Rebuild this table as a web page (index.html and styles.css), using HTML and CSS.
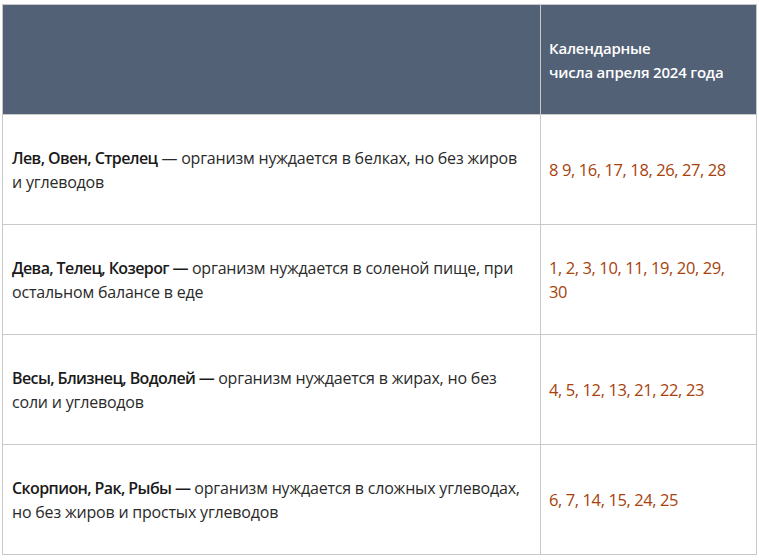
FILE: index.html
```html
<!DOCTYPE html>
<html lang="ru">
<head>
<meta charset="utf-8">
<link rel="stylesheet" href="styles.css">
</head>
<body>
<table class="tbl">
  <colgroup><col class="c1"><col class="c2"></colgroup>
  <thead>
    <tr class="head">
      <th></th>
      <th>Календарные<br>числа апреля 2024 года</th>
    </tr>
  </thead>
  <tbody>
    <tr>
      <td><b>Лев, Овен, Стрелец</b> — организм нуждается в белках, но без жиров и углеводов</td>
      <td class="num">8 9, 16, 17, 18, 26, 27, 28</td>
    </tr>
    <tr>
      <td><b>Дева, Телец, Козерог —</b> организм нуждается в соленой пище, при остальном балансе в еде</td>
      <td class="num">1, 2, 3, 10, 11, 19, 20, 29, 30</td>
    </tr>
    <tr>
      <td><b>Весы, Близнец, Водолей —</b> организм нуждается в жирах, но без соли и углеводов</td>
      <td class="num">4, 5, 12, 13, 21, 22, 23</td>
    </tr>
    <tr>
      <td><b>Скорпион, Рак, Рыбы —</b> организм нуждается в сложных углеводах, но без жиров и простых углеводов</td>
      <td class="num">6, 7, 14, 15, 24, 25</td>
    </tr>
  </tbody>
</table>
</body>
</html>
```

FILE: styles.css
```css
html, body {
  margin: 0;
  background: #ffffff;
}
body {
  padding: 4px 3px 0 2px;
  font-family: "Open Sans", "Noto Sans", sans-serif;
  color: #2a2a2a;
}
.tbl {
  border-collapse: collapse;
  width: 754px;
  table-layout: fixed;
}
.c1 { width: 538px; }
.c2 { width: 216px; }
.tbl th, .tbl td {
  border: 1px solid #c9c9c9;
  text-align: left;
  vertical-align: middle;
}
.head th {
  background: #536176;
  color: #ffffff;
  font-size: 15px;
  font-weight: 600;
  line-height: 24px;
  height: 110px;
  padding: 0 8px;
  box-sizing: border-box;
  letter-spacing: -0.2px;
}
.tbl td {
  height: 110px;
  box-sizing: border-box;
  padding: 0 14px 0 9px;
  font-size: 16px;
  line-height: 24px;
  letter-spacing: -0.2px;
}
.tbl td b {
  font-weight: 600;
  color: #1a1a1a;
  letter-spacing: -0.6px;
}
.tbl td.num {
  color: #a8420c;
  padding: 0 22px 0 8px;
  font-size: 16.5px;
  letter-spacing: -0.4px;
}
```
